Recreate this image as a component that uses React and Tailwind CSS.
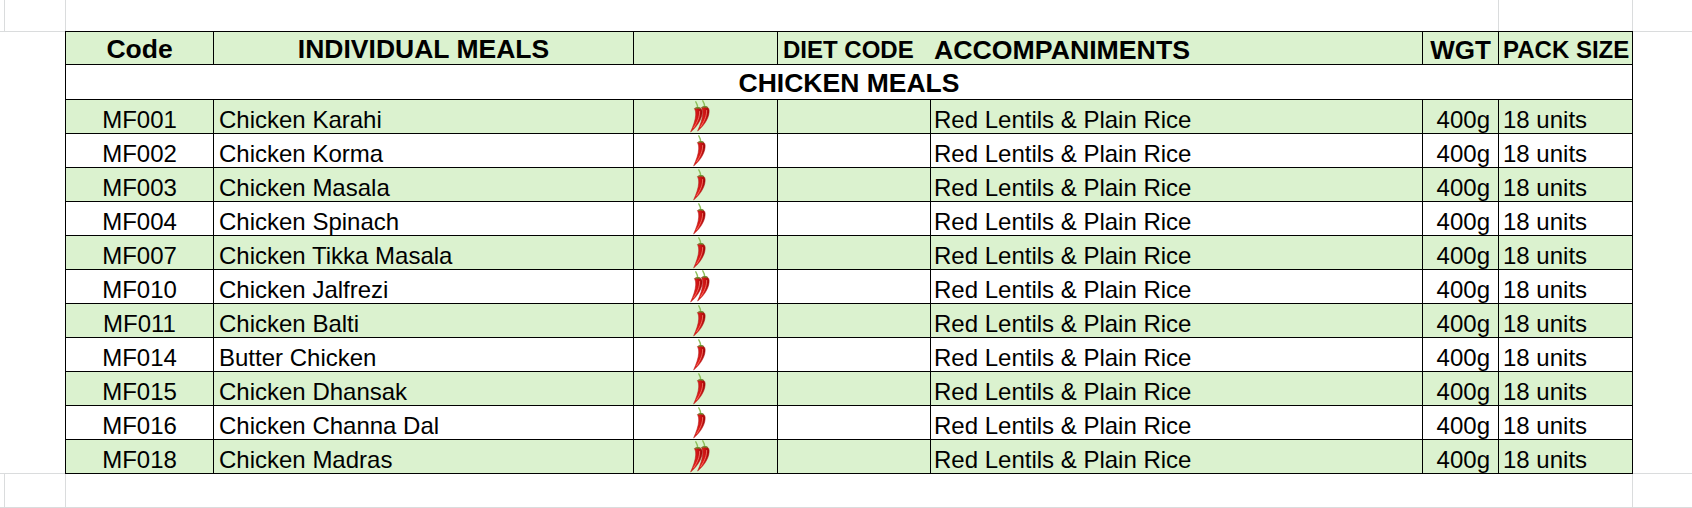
const MEALS = [
  ['MF001', 'Chicken Karahi', 2],
  ['MF002', 'Chicken Korma', 1],
  ['MF003', 'Chicken Masala', 1],
  ['MF004', 'Chicken Spinach', 1],
  ['MF007', 'Chicken Tikka Masala', 1],
  ['MF010', 'Chicken Jalfrezi', 2],
  ['MF011', 'Chicken Balti', 1],
  ['MF014', 'Butter Chicken', 1],
  ['MF015', 'Chicken Dhansak', 1],
  ['MF016', 'Chicken Channa Dal', 1],
  ['MF018', 'Chicken Madras', 2],
];

// one pepper, drawn with its top-left at the origin; tip points down-left
function Pepper({ x = 0, y = 0, id }) {
  return (
    <g transform={`translate(${x} ${y})`}>
      <path d="M7.8 7.5 Q7.6 3.5 5.8 0.8" fill="none" stroke="#8cbf5a" strokeWidth="1.4" strokeLinecap="round" />
      <path
        d="M4.4 7.6 C7 5.6 11.6 6 12.1 10 C12.7 16 8.6 24.5 0.6 31 C3.2 25 5.5 19 5.7 14 C5.8 11 5.3 9 4.4 7.6 Z"
        fill={`url(#${id})`}
        stroke="#a80c0c"
        strokeWidth="0.5"
      />
      <path d="M5.8 7.3 Q8 6.2 10 7.2" fill="none" stroke="#5f9a34" strokeWidth="1.2" strokeLinecap="round" />
      <path d="M9.6 10.5 C9.8 15.5 7.6 21 3.8 26.5" fill="none" stroke="#ff8474" strokeWidth="1" strokeLinecap="round" opacity="0.75" />
    </g>
  );
}

function Chili({ count }) {
  const gid = `chili-${count}`;
  return (
    <svg width="22" height="33" viewBox="0 -1 22 33">
      <defs>
        <linearGradient id={gid} x1="0" y1="0" x2="1" y2="0">
          <stop offset="0" stopColor="#ec2a20" />
          <stop offset="0.55" stopColor="#d41616" />
          <stop offset="1" stopColor="#a00808" />
        </linearGradient>
      </defs>
      {count === 2 ? (
        <>
          <Pepper x={0} y={0} id={gid} />
          <Pepper x={7} y={-1} id={gid} />
        </>
      ) : (
        <Pepper x={3} y={0} id={gid} />
      )}
    </svg>
  );
}

const line = 'border-[#dadcdd]';
const cell = 'border-r border-b border-black flex items-center';

export default function App() {
  return (
    <div className="w-[1692px] h-[508px] bg-white overflow-hidden text-black font-['Liberation_Sans',Arial,sans-serif]">
      {/* sheet gridlines above the table */}
      <div className="flex h-[31px]">
        <div className={`w-[5px] border-r ${line}`} />
        <div className={`w-[61px] border-r ${line}`} />
        <div className={`w-[1433px] border-r ${line}`} />
        <div className={`w-[134px] border-r ${line}`} />
        <div className="flex-1" />
      </div>

      <div className="flex">
        <div className={`w-[65px] border-t border-b ${line}`} />
        <div className="w-[1568px] border-l border-t border-black grid grid-cols-[148px_420px_144px_153px_492px_76px_134px]">
          {/* header */}
          <div className={`${cell} h-[33px] pt-[4px] bg-[#dbf2cf] justify-center text-[26.5px] font-bold`}>Code</div>
          <div className={`${cell} h-[33px] pt-[4px] bg-[#dbf2cf] justify-center text-[26.5px] font-bold`}>INDIVIDUAL MEALS</div>
          <div className={`${cell} h-[33px] bg-[#dbf2cf]`} />
          <div className={`${cell} col-span-2 h-[33px] pt-[4px] bg-[#dbf2cf] font-bold`}>
            <span className="w-[153px] pl-[5px] text-[24px]">DIET CODE</span>
            <span className="pl-[3px] text-[26.7px]">ACCOMPANIMENTS</span>
          </div>
          <div className={`${cell} h-[33px] pt-[4px] bg-[#dbf2cf] justify-center text-[26px] font-bold`}>WGT</div>
          <div className={`${cell} h-[33px] pt-[4px] bg-[#dbf2cf] pl-[4px] text-[24px] font-bold whitespace-nowrap`}>PACK SIZE</div>

          <div className={`${cell} col-span-7 h-[35px] pt-[4px] justify-center text-[26.5px] font-bold`}>CHICKEN MEALS</div>

          {MEALS.map(([code, name, heat], i) => {
            const bg = i % 2 === 0 ? 'bg-[#dbf2cf]' : 'bg-white';
            return (
              <div key={code} className="contents text-[24px]">
                <div className={`${cell} ${bg} h-[34px] pt-[6px] justify-center`}>{code}</div>
                <div className={`${cell} ${bg} h-[34px] pt-[6px] pl-[5px]`}>{name}</div>
                <div className={`${cell} ${bg} h-[34px] pl-[56px]`}>
                  <Chili count={heat} />
                </div>
                <div className={`${cell} ${bg} h-[34px]`} />
                <div className={`${cell} ${bg} h-[34px] pt-[6px] pl-[3px]`}>Red Lentils &amp; Plain Rice</div>
                <div className={`${cell} ${bg} h-[34px] pt-[6px] justify-end pr-[8px]`}>400g</div>
                <div className={`${cell} ${bg} h-[34px] pt-[6px] pl-[4px]`}>18 units</div>
              </div>
            );
          })}
        </div>
        <div className={`flex-1 border-t border-b ${line}`} />
      </div>

      {/* sheet gridlines below the table */}
      <div className="flex h-[34px]">
        <div className={`w-[5px] border-r border-b ${line}`} />
        <div className={`w-[61px] border-r border-b ${line}`} />
        <div className={`w-[1567px] border-r border-b ${line}`} />
        <div className={`flex-1 border-b ${line}`} />
      </div>
    </div>
  );
}
